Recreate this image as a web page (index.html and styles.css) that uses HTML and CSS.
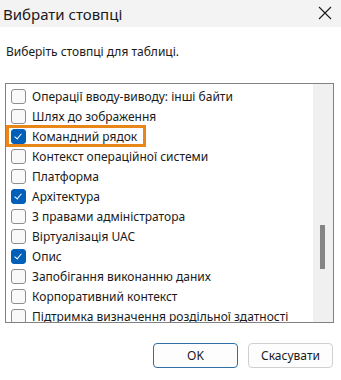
FILE: index.html
```html
<!DOCTYPE html>
<html>
<head>
	<meta charset="utf-8">
	<title>Вибрати стовпці</title>
	<link rel="stylesheet" href="styles.css">
</head>
<body>
	<div class="dialog">
		<header class="titlebar">
			<span class="title">Вибрати стовпці</span>
			<span class="close">
				<svg width="14" height="14" viewBox="0 0 14 14"><path d="M1 1 L13 13 M13 1 L1 13" stroke="#1a1a1a" stroke-width="1.1" fill="none"/></svg>
			</span>
		</header>
		<p class="hint">Виберіть стовпці для таблиці.</p>
		<div class="list">
			<div class="rows">
				<div class="row"><span class="box"></span>Операції вводу-виводу: інші байти</div>
				<div class="row"><span class="box"></span>Шлях до зображення</div>
				<div class="row"><span class="mark"><span class="box checked"></span>Командний рядок</span></div>
				<div class="row"><span class="box"></span>Контекст операційної системи</div>
				<div class="row"><span class="box"></span>Платформа</div>
				<div class="row"><span class="box checked"></span>Архітектура</div>
				<div class="row"><span class="box"></span>З правами адміністратора</div>
				<div class="row"><span class="box"></span>Віртуалізація UAC</div>
				<div class="row"><span class="box checked"></span>Опис</div>
				<div class="row"><span class="box"></span>Запобігання виконанню даних</div>
				<div class="row"><span class="box"></span>Корпоративний контекст</div>
				<div class="row"><span class="box"></span>Підтримка визначення роздільної здатності</div>
			</div>
			<div class="scrollbar"><div class="thumb"></div></div>
		</div>
		<footer class="buttons">
			<button class="btn default">OK</button>
			<button class="btn">Скасувати</button>
		</footer>
	</div>
</body>
</html>
```

FILE: styles.css
```css
body {
	margin: 0;
	background: #ffffff;
	font-family: "Noto Sans", "Open Sans", sans-serif;
	color: #1a1a1a;
}

.dialog {
	width: 341px;
	height: 380px;
	overflow: hidden;
}

.titlebar {
	height: 27px;
	background: #f3f3f3;
	display: flex;
	align-items: center;
	justify-content: space-between;
	padding: 0 9px 0 3px;
}

.title {
	font-size: 15px;
}

.close {
	display: flex;
	margin-top: -2px;
}

.hint {
	margin: 0;
	padding: 16px 0 0 6px;
	height: 40px;
	box-sizing: border-box;
	font-size: 12px;
}

.list {
	margin: 16px 0 0 5px;
	width: 329px;
	height: 240px;
	box-sizing: border-box;
	border: 1px solid #828282;
	display: flex;
	overflow: hidden;
}

.rows {
	flex: 1;
	padding-top: 2px;
}

.row {
	height: 20px;
	display: flex;
	align-items: center;
	padding-left: 5px;
	font-size: 12px;
	white-space: nowrap;
}

.box {
	width: 13px;
	height: 13px;
	border: 1px solid #8d8d8d;
	border-radius: 3px;
	background: #f9f9f9;
	margin-right: 6px;
	flex: none;
	position: relative;
}

.box.checked {
	background: #005fb8;
	border-color: #005fb8;
}

.box.checked::after {
	content: "";
	position: absolute;
	left: 4px;
	top: 2px;
	width: 3px;
	height: 6px;
	border: solid #ffffff;
	border-width: 0 1px 1px 0;
	transform: rotate(40deg);
}

.mark {
	display: flex;
	align-items: center;
	height: 16px;
	margin-left: -2px;
	padding: 0 6px 0 2px;
	outline: 3px solid #e8861a;
}

.scrollbar {
	width: 20px;
	background: #f0f0f0;
	position: relative;
}

.thumb {
	position: absolute;
	left: 7px;
	top: 141px;
	width: 5px;
	height: 44px;
	background: #858585;
}

.buttons {
	display: flex;
	justify-content: flex-end;
	gap: 10px;
	padding: 20px 8px 0 0;
}

.btn {
	width: 85px;
	height: 25px;
	font-family: inherit;
	font-size: 12px;
	color: #1a1a1a;
	background: #fdfdfd;
	border: 1px solid #d0d0d0;
	border-radius: 4px;
	padding: 0;
}

.btn.default {
	border-color: #2f6fa6;
}
```
